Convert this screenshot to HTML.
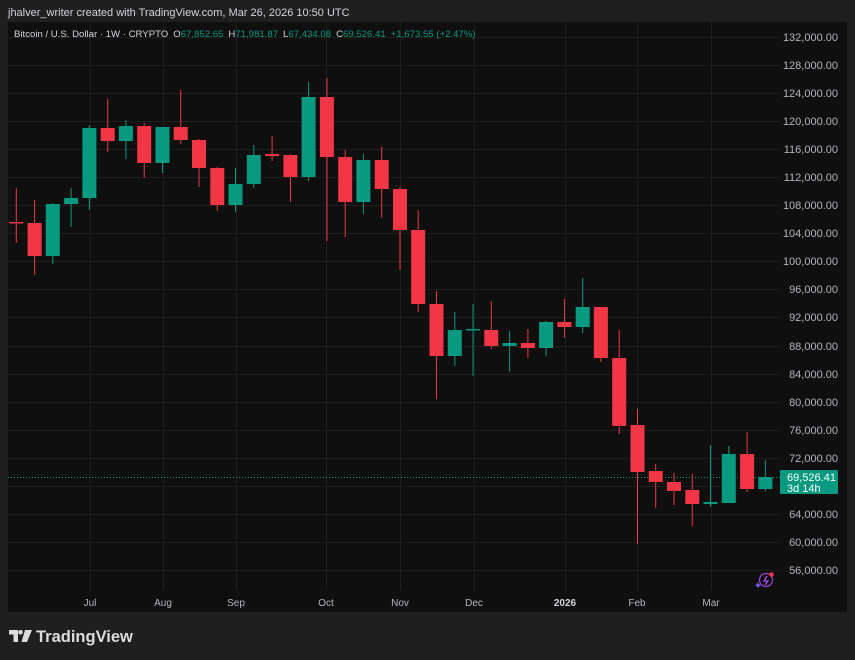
<!DOCTYPE html>
<html><head><meta charset="utf-8"><style>
html,body{margin:0;padding:0;background:#1f1f1f;width:855px;height:660px;overflow:hidden;font-family:"Liberation Sans",sans-serif}
svg{position:absolute;left:0;top:0}
</style></head><body>
<svg width="855" height="660" viewBox="0 0 855 660" xmlns="http://www.w3.org/2000/svg" font-family="Liberation Sans, sans-serif">
<rect x="0" y="0" width="855" height="660" fill="#1f1f1f"/>
<text x="8" y="16" font-size="11" fill="#d1d4dc">jhalver_writer created with TradingView.com, Mar 26, 2026 10:50 UTC</text>
<rect x="8" y="22" width="839" height="590" fill="#0f0f0f"/>
<g stroke="#1e1e1e" stroke-width="1">
<line x1="8" x2="780" y1="37.5" y2="37.5"/><line x1="8" x2="780" y1="65.5" y2="65.5"/><line x1="8" x2="780" y1="93.5" y2="93.5"/><line x1="8" x2="780" y1="121.5" y2="121.5"/><line x1="8" x2="780" y1="149.5" y2="149.5"/><line x1="8" x2="780" y1="177.5" y2="177.5"/><line x1="8" x2="780" y1="205.5" y2="205.5"/><line x1="8" x2="780" y1="233.5" y2="233.5"/><line x1="8" x2="780" y1="261.5" y2="261.5"/><line x1="8" x2="780" y1="289.5" y2="289.5"/><line x1="8" x2="780" y1="317.5" y2="317.5"/><line x1="8" x2="780" y1="346.5" y2="346.5"/><line x1="8" x2="780" y1="374.5" y2="374.5"/><line x1="8" x2="780" y1="402.5" y2="402.5"/><line x1="8" x2="780" y1="430.5" y2="430.5"/><line x1="8" x2="780" y1="458.5" y2="458.5"/><line x1="8" x2="780" y1="486.5" y2="486.5"/><line x1="8" x2="780" y1="514.5" y2="514.5"/><line x1="8" x2="780" y1="542.5" y2="542.5"/><line x1="8" x2="780" y1="570.5" y2="570.5"/>
<line x1="90.5" x2="90.5" y1="22" y2="590"/><line x1="163.5" x2="163.5" y1="22" y2="590"/><line x1="236.5" x2="236.5" y1="22" y2="590"/><line x1="326.5" x2="326.5" y1="22" y2="590"/><line x1="400.5" x2="400.5" y1="22" y2="590"/><line x1="474.5" x2="474.5" y1="22" y2="590"/><line x1="565.5" x2="565.5" y1="22" y2="590"/><line x1="637.5" x2="637.5" y1="22" y2="590"/><line x1="711.5" x2="711.5" y1="22" y2="590"/>
</g>
<text x="14" y="37" font-size="9.6" fill="#d1d4dc">Bitcoin / U.S. Dollar · 1W · CRYPTO<tspan dx="5">O</tspan><tspan fill="#089981">67,852.65</tspan><tspan dx="5">H</tspan><tspan fill="#089981">71,981.87</tspan><tspan dx="5">L</tspan><tspan fill="#089981">67,434.08</tspan><tspan dx="5">C</tspan><tspan fill="#089981">69,526.41</tspan><tspan dx="5" fill="#089981">+1,673.55 (+2.47%)</tspan></text>
<line x1="8" x2="780" y1="477.5" y2="477.5" stroke="#089981" stroke-width="1" stroke-dasharray="1,2"/>
<g>
<g fill="#f23645" stroke="#f23645">
<line x1="16.3" x2="16.3" y1="188" y2="243"/><rect x="9.3" y="222" width="14" height="1.5" stroke="none"/>
<line x1="34.6" x2="34.6" y1="200" y2="275"/><rect x="27.6" y="223" width="14" height="33" stroke="none"/>
<line x1="107.7" x2="107.7" y1="99" y2="152"/><rect x="100.7" y="128" width="14" height="13" stroke="none"/>
<line x1="144.2" x2="144.2" y1="123" y2="178"/><rect x="137.2" y="126" width="14" height="37" stroke="none"/>
<line x1="180.7" x2="180.7" y1="90" y2="144"/><rect x="173.7" y="127" width="14" height="13" stroke="none"/>
<line x1="199" x2="199" y1="139" y2="187"/><rect x="192" y="140" width="14" height="28" stroke="none"/>
<line x1="217.3" x2="217.3" y1="167" y2="211"/><rect x="210.3" y="168" width="14" height="37" stroke="none"/>
<line x1="272.1" x2="272.1" y1="136" y2="161"/><rect x="265.1" y="154" width="14" height="2" stroke="none"/>
<line x1="290.4" x2="290.4" y1="154" y2="202"/><rect x="283.4" y="155" width="14" height="22" stroke="none"/>
<line x1="326.9" x2="326.9" y1="78" y2="241"/><rect x="319.9" y="97" width="14" height="60" stroke="none"/>
<line x1="345.2" x2="345.2" y1="150" y2="237"/><rect x="338.2" y="157" width="14" height="45" stroke="none"/>
<line x1="381.7" x2="381.7" y1="147" y2="218"/><rect x="374.7" y="160" width="14" height="29" stroke="none"/>
<line x1="400" x2="400" y1="187" y2="270"/><rect x="393" y="189" width="14" height="41" stroke="none"/>
<line x1="418.2" x2="418.2" y1="210" y2="312"/><rect x="411.2" y="230" width="14" height="74" stroke="none"/>
<line x1="436.5" x2="436.5" y1="291" y2="399"/><rect x="429.5" y="304" width="14" height="52" stroke="none"/>
<line x1="491.3" x2="491.3" y1="301" y2="349"/><rect x="484.3" y="330" width="14" height="16" stroke="none"/>
<line x1="527.9" x2="527.9" y1="329" y2="358"/><rect x="520.9" y="343" width="14" height="5" stroke="none"/>
<line x1="564.4" x2="564.4" y1="299" y2="338"/><rect x="557.4" y="322" width="14" height="5" stroke="none"/>
<line x1="600.9" x2="600.9" y1="307" y2="362"/><rect x="593.9" y="307" width="14" height="51" stroke="none"/>
<line x1="619.2" x2="619.2" y1="330" y2="434"/><rect x="612.2" y="358" width="14" height="68" stroke="none"/>
<line x1="637.5" x2="637.5" y1="409" y2="544"/><rect x="630.5" y="425" width="14" height="47" stroke="none"/>
<line x1="655.7" x2="655.7" y1="464" y2="508"/><rect x="648.7" y="471" width="14" height="11" stroke="none"/>
<line x1="674" x2="674" y1="473" y2="505"/><rect x="667" y="482" width="14" height="9" stroke="none"/>
<line x1="692.3" x2="692.3" y1="474" y2="526"/><rect x="685.3" y="490" width="14" height="14" stroke="none"/>
<line x1="747.1" x2="747.1" y1="432" y2="492"/><rect x="740.1" y="454" width="14" height="35" stroke="none"/>
</g>
<g fill="#089981" stroke="#089981">
<line x1="52.8" x2="52.8" y1="203" y2="264"/><rect x="45.8" y="204" width="14" height="52" stroke="none"/>
<line x1="71.1" x2="71.1" y1="188" y2="227"/><rect x="64.1" y="198" width="14" height="6" stroke="none"/>
<line x1="89.4" x2="89.4" y1="125" y2="210"/><rect x="82.4" y="128" width="14" height="70" stroke="none"/>
<line x1="125.9" x2="125.9" y1="120" y2="159"/><rect x="118.9" y="126" width="14" height="15" stroke="none"/>
<line x1="162.5" x2="162.5" y1="127" y2="173"/><rect x="155.5" y="127" width="14" height="36" stroke="none"/>
<line x1="235.5" x2="235.5" y1="168" y2="212"/><rect x="228.5" y="184" width="14" height="21" stroke="none"/>
<line x1="253.8" x2="253.8" y1="145" y2="188"/><rect x="246.8" y="155" width="14" height="29" stroke="none"/>
<line x1="308.6" x2="308.6" y1="82" y2="181"/><rect x="301.6" y="97" width="14" height="80" stroke="none"/>
<line x1="363.4" x2="363.4" y1="154" y2="214"/><rect x="356.4" y="160" width="14" height="42" stroke="none"/>
<line x1="454.8" x2="454.8" y1="312" y2="366"/><rect x="447.8" y="330" width="14" height="26" stroke="none"/>
<line x1="473.1" x2="473.1" y1="304" y2="376"/><rect x="466.1" y="329" width="14" height="1.5" stroke="none"/>
<line x1="509.6" x2="509.6" y1="331" y2="372"/><rect x="502.6" y="343" width="14" height="3" stroke="none"/>
<line x1="546.1" x2="546.1" y1="321" y2="356"/><rect x="539.1" y="322" width="14" height="26" stroke="none"/>
<line x1="582.7" x2="582.7" y1="278" y2="333"/><rect x="575.7" y="307" width="14" height="20" stroke="none"/>
<line x1="710.5" x2="710.5" y1="445" y2="507"/><rect x="703.5" y="502" width="14" height="2" stroke="none"/>
<line x1="728.8" x2="728.8" y1="446" y2="503"/><rect x="721.8" y="454" width="14" height="49" stroke="none"/>
<line x1="765.4" x2="765.4" y1="460" y2="491"/><rect x="758.4" y="477" width="14" height="12" stroke="none"/>
</g>
</g>
<g font-size="11" fill="#b2b5be" text-anchor="end">
<text x="838" y="41">132,000.00</text><text x="838" y="69">128,000.00</text><text x="838" y="97">124,000.00</text><text x="838" y="125">120,000.00</text><text x="838" y="153">116,000.00</text><text x="838" y="181">112,000.00</text><text x="838" y="209">108,000.00</text><text x="838" y="237">104,000.00</text><text x="838" y="265">100,000.00</text><text x="838" y="293">96,000.00</text><text x="838" y="321">92,000.00</text><text x="838" y="350">88,000.00</text><text x="838" y="378">84,000.00</text><text x="838" y="406">80,000.00</text><text x="838" y="434">76,000.00</text><text x="838" y="462">72,000.00</text><text x="838" y="518">64,000.00</text><text x="838" y="546">60,000.00</text><text x="838" y="574">56,000.00</text>
</g>
<rect x="780" y="470" width="58" height="24" rx="1" fill="#089981"/>
<text x="787" y="481" font-size="11" fill="#ffffff">69,526.41</text>
<text x="787" y="492" font-size="11" fill="#ffffff">3d 14h</text>
<g font-size="10" fill="#b2b5be" text-anchor="middle">
<text x="90" y="606">Jul</text><text x="163" y="606">Aug</text><text x="236" y="606">Sep</text><text x="326" y="606">Oct</text><text x="400" y="606">Nov</text><text x="474" y="606">Dec</text><text x="565" y="606" font-weight="bold" fill="#d1d4dc">2026</text><text x="637" y="606">Feb</text><text x="711" y="606">Mar</text>
</g>
<g fill="none" stroke="#9c3fcf" stroke-width="1.3">
<circle cx="766" cy="580" r="6.5"/>
<path d="M767 576 L764 581 L768 581 L765 585" stroke="#a855f7"/>
</g>
<path d="M758 582 l1 2.2 2.2 1 -2.2 1 -1 2.2 -1 -2.2 -2.2 -1 2.2 -1z" fill="#7c5cff"/>
<circle cx="771.5" cy="574.5" r="2.3" fill="#f23645"/>
<g fill="#dcdcdc">
<path d="M9 630 h9 v12 h-4.5 v-7.5 h-4.5z"/>
<circle cx="20.5" cy="632.3" r="2.3"/>
<path d="M25 630 h7 l-5 12 h-5.5z"/>
</g>
<text x="36" y="642" font-size="16.5" font-weight="bold" fill="#dcdcdc">TradingView</text>
</svg>
</body></html>
